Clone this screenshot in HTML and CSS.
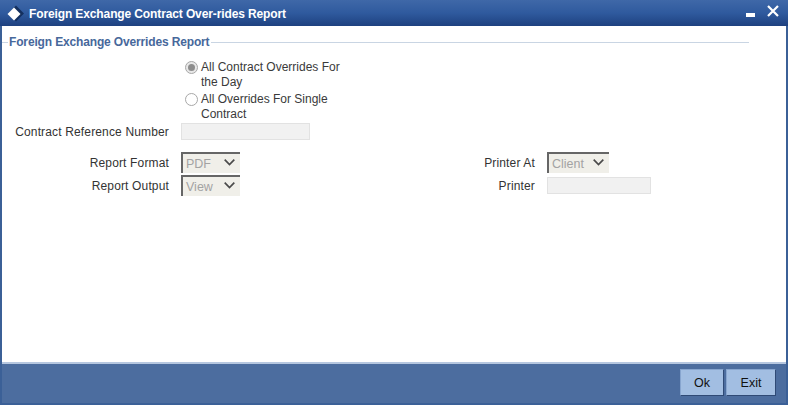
FILE: index.html
```html
<!DOCTYPE html>
<html lang="en">
<head>
<meta charset="utf-8">
<title>Foreign Exchange Contract Over-rides Report</title>
<link rel="stylesheet" href="styles.css">
</head>
<body>
<div class="window">
  <header class="titlebar">
    <svg class="logo" width="20" height="20" viewBox="0 0 20 20"><path d="M10 1.5 L18 9.5 L10 17.5 L2 9.5 Z" fill="#14305f"/><path d="M8 3.5 L14.5 10 L8 16.5 L1.5 10 Z" fill="#fff"/></svg>
    <h1 class="title">Foreign Exchange Contract Over-rides Report</h1>
    <div class="controls">
      <svg class="min-icon" width="9" height="4" viewBox="0 0 9 4"><rect width="9" height="4" fill="#fff"/></svg>
      <svg width="12" height="12" viewBox="0 0 12 12"><path d="M1 1 L11 11 M11 1 L1 11" stroke="#fff" stroke-width="2.2" fill="none"/></svg>
    </div>
  </header>
  <main class="content">
    <div class="legend"><span class="legend-lead"></span><span class="legend-text">Foreign Exchange Overrides Report</span><span class="legend-line"></span></div>
    <div class="radios">
      <div class="radio-row"><span class="radio checked"></span><span class="radio-label">All Contract Overrides For the Day</span></div>
      <div class="radio-row"><span class="radio"></span><span class="radio-label">All Overrides For Single Contract</span></div>
    </div>
    <div class="row ref-row">
      <label class="label">Contract Reference Number</label>
      <input class="text-input wide" disabled>
    </div>
    <div class="columns">
      <div class="col left-col">
        <div class="row select-row">
          <label class="label">Report Format</label>
          <div class="select"><span>PDF</span><svg class="chev" width="11" height="7" viewBox="0 0 11 7"><path d="M0.7 0.7 L5.5 5.5 L10.3 0.7" stroke="#4a4a4a" stroke-width="1.7" fill="none"/></svg></div>
        </div>
        <div class="row select-row">
          <label class="label">Report Output</label>
          <div class="select"><span>View</span><svg class="chev" width="11" height="7" viewBox="0 0 11 7"><path d="M0.7 0.7 L5.5 5.5 L10.3 0.7" stroke="#4a4a4a" stroke-width="1.7" fill="none"/></svg></div>
        </div>
      </div>
      <div class="col right-col">
        <div class="row select-row">
          <label class="label short">Printer At</label>
          <div class="select narrow"><span>Client</span><svg class="chev" width="11" height="7" viewBox="0 0 11 7"><path d="M0.7 0.7 L5.5 5.5 L10.3 0.7" stroke="#4a4a4a" stroke-width="1.7" fill="none"/></svg></div>
        </div>
        <div class="row select-row">
          <label class="label short">Printer</label>
          <input class="text-input small" disabled>
        </div>
      </div>
    </div>
  </main>
  <footer class="footer">
    <button class="btn" type="button">Ok</button>
    <button class="btn exit" type="button">Exit</button>
  </footer>
</div>
</body>
</html>
```
FILE: styles.css
```css
* { box-sizing: border-box; }
html, body { margin: 0; padding: 0; }
body { width: 788px; height: 405px; overflow: hidden; font-family: "Liberation Sans", Arial, sans-serif; font-size: 12px; color: #333; }
.window { width: 788px; height: 405px; display: flex; flex-direction: column; background: #3b6097; padding: 0 2px 2px; }
.titlebar { height: 26px; margin: 0 -2px; padding: 2px 9px 0 6px; display: flex; align-items: center; background: linear-gradient(#3f68a8, #2f5a9e 50%, #1e4180); flex: none; }
.logo { flex: none; }
.title { margin: 0 0 0 3px; font-size: 12px; font-weight: bold; color: #fff; flex: 1; letter-spacing: -0.12px; }
.controls { display: flex; align-items: flex-start; gap: 12px; height: 20px; padding-top: 1px; }
.min-icon { margin-top: 8px; }
.content { flex: 1; background: #fff; padding: 8px 0 0; display: flex; flex-direction: column; }
.legend { display: flex; align-items: center; height: 16px; }
.legend-lead { flex: none; width: 6px; height: 1px; background: #c9d5e3; margin-right: 1px; }
.legend-text { color: #47689b; font-weight: bold; font-size: 12px; letter-spacing: -0.15px; }
.legend-line { flex: none; width: 538px; height: 1px; background: #c9d5e3; margin-left: 2px; }
.radios { margin: 10px 0 0 183px; width: 165px; display: flex; flex-direction: column; gap: 2px; }
.radio-row { display: flex; align-items: flex-start; }
.radio { flex: none; width: 13px; height: 13px; margin: 1px 3px 0 0; border: 1px solid #a8a8a8; border-radius: 50%; background: #fff; display: flex; align-items: center; justify-content: center; }
.radio.checked { background: #e8e8e8; }
.radio.checked::after { content: ""; width: 7px; height: 7px; border-radius: 50%; background: #8d8d8d; }
.radio-label { line-height: 15px; color: #3a3a3a; }
.row { display: flex; align-items: center; }
.label { flex: none; width: 167px; text-align: right; margin-right: 12px; color: #333; letter-spacing: 0.15px; }
.label.short { width: 60px; }
.ref-row { margin-top: 1px; height: 17px; }
.text-input { height: 17px; border: 1px solid #e2e2e2; background: #f1f1f1; padding: 0; display: block; }
.text-input.wide { width: 129px; }
.text-input.small { width: 104px; }
.columns { display: flex; margin-top: 12px; }
.left-col { width: 473px; }
.col { display: flex; flex-direction: column; gap: 2px; }
.select-row { height: 21px; }
.select { width: 59px; height: 21px; display: flex; align-items: center; justify-content: space-between; padding: 0 5px 0 3px; background: #f0efe9; border-top: 2px solid #666; border-left: 2px solid #666; color: #a3a3a3; font-size: 12.5px; }
.select.narrow { width: 62px; }
.chev { margin-top: -3px; }
.footer { height: 41px; flex: none; display: flex; justify-content: flex-end; align-items: flex-start; gap: 2px; padding: 5px 10px 0 0; background: #4c6d9f; border-top: 2px solid #b6c7e0; }
.btn { width: 44px; height: 27px; padding: 0; font: 12.5px "Liberation Sans", Arial, sans-serif; color: #111; background: #a2bee2; border: 1px solid #87a5cf; border-right-color: #2f4a76; border-bottom-color: #2f4a76; }
.btn.exit { width: 50px; }
```
